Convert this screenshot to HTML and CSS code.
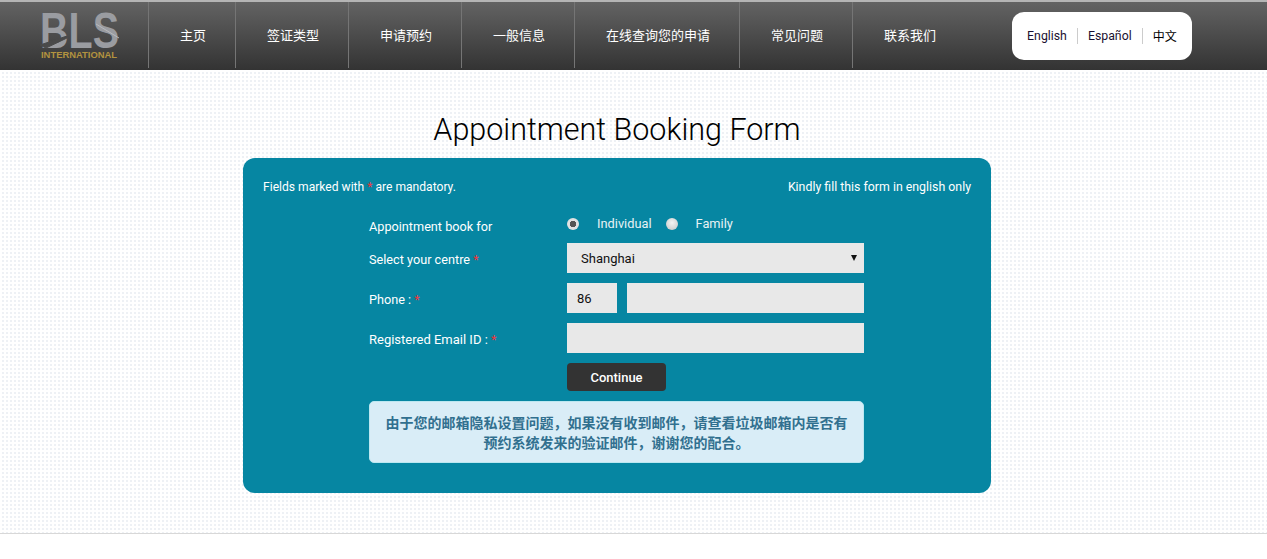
FILE: index.html
```html
<!DOCTYPE html>
<html lang="zh">
<head>
    <meta charset="UTF-8">
    <meta name="viewport" content="width=device-width, initial-scale=1.0">
    <title>Appointment Booking Form</title>
    <link rel="stylesheet" href="styles.css">
</head>
<body>
    <header class="top-bar">
        <a class="logo" href="#">
            <svg width="80" height="66" viewBox="0 0 80 66">
                <text class="logo-mark" x="0" y="46" textLength="79" lengthAdjust="spacingAndGlyphs">BLS</text>
                <path class="logo-cut" d="M0 43 L27 34 L27 36 L6 46 Z"/>
                <path class="logo-shine" d="M56 22 L79 36"/>
                <text class="logo-sub" x="1" y="56" textLength="76" lengthAdjust="spacingAndGlyphs">INTERNATIONAL</text>
            </svg>
        </a>
        <nav class="main-nav">
            <a href="#">主页</a>
            <a href="#">签证类型</a>
            <a href="#">申请预约</a>
            <a href="#">一般信息</a>
            <a href="#">在线查询您的申请</a>
            <a href="#">常见问题</a>
            <a href="#">联系我们</a>
        </nav>
        <div class="lang-box">
            <a href="#">English</a>
            <a href="#">Español</a>
            <a class="lang-cn" href="#">中文</a>
        </div>
    </header>

    <main class="page">
        <div class="page-inner">
            <h1>Appointment Booking Form</h1>
            <form class="booking-card">
                <div class="card-notes">
                    <span class="note-left">Fields marked with <em>*</em> are mandatory.</span>
                    <span class="note-right">Kindly fill this form in english only</span>
                </div>

                <div class="form-row radio-row">
                    <label class="field-label">Appointment book for</label>
                    <div class="radio-group">
                        <input type="radio" name="bookfor" id="individual" checked>
                        <label for="individual">Individual</label>
                        <input type="radio" name="bookfor" id="family">
                        <label for="family">Family</label>
                    </div>
                </div>

                <div class="form-row">
                    <label class="field-label">Select your centre <em>*</em></label>
                    <div class="select-wrap">
                        <select>
                            <option>Shanghai</option>
                        </select>
                    </div>
                </div>

                <div class="form-row">
                    <label class="field-label">Phone : <em>*</em></label>
                    <div class="phone-group">
                        <input class="phone-code" type="text" value="86">
                        <input type="text">
                    </div>
                </div>

                <div class="form-row">
                    <label class="field-label email-label">Registered Email ID : <em>*</em></label>
                    <input type="text">
                </div>

                <div class="form-row button-row">
                    <span class="field-label"></span>
                    <button type="button">Continue</button>
                </div>

                <div class="notice">由于您的邮箱隐私设置问题，如果没有收到邮件，请查看垃圾邮箱内是否有预约系统发来的验证邮件，谢谢您的配合。</div>
            </form>
        </div>
    </main>
</body>
</html>
```

FILE: styles.css
```css
html {
    background: #fff;
}
body {
    margin: 0;
    height: 559px;
    overflow: hidden;
    font-family: Roboto, "Noto Sans CJK SC", sans-serif;
    font-size: 13px;
    color: #fff;
}
a {
    text-decoration: none;
}
em {
    font-style: normal;
    color: #f0343c;
}

/* header */
.top-bar {
    display: flex;
    height: 68px;
    border-top: 2px solid #b5b5b5;
    background: linear-gradient(#636363, #333);
}
.logo {
    width: 148px;
    box-sizing: border-box;
    padding-left: 40px;
    display: block;
}
.logo svg {
    display: block;
}
.logo-mark {
    font: bold 50px "Liberation Sans", sans-serif;
    fill: #9a9ca1;
}
.logo-cut {
    fill: #4a4a4a;
    stroke: #4a4a4a;
}
.logo-shine {
    fill: none;
    stroke: #b8babe;
}
.logo-sub {
    font: bold 9px "Liberation Sans", sans-serif;
    fill: #b3933f;
}
.main-nav {
    display: flex;
    height: 66px;
}
.main-nav a {
    padding: 0 29px 0 31px;
    border-left: 1px solid #757575;
    font-family: "Noto Sans CJK SC", sans-serif;
    font-size: 13px;
    line-height: 66px;
    color: #fff;
}
.lang-box {
    display: flex;
    align-items: center;
    width: 180px;
    height: 48px;
    box-sizing: border-box;
    margin: 10px 0 0 47px;
    padding-left: 15px;
    border-radius: 12px;
    background: #fff;
}
.lang-box a {
    padding-right: 10px;
    margin-right: 10px;
    border-right: 1px solid #ccc;
    font-size: 12.3px;
    line-height: 16px;
    white-space: nowrap;
    color: #1a1030;
}
.lang-box .lang-cn {
    margin: 0;
    padding: 0;
    border: 0;
    font-family: "Noto Sans CJK SC", sans-serif;
    font-size: 12px;
    color: #000;
}

/* page */
.page {
    height: 464px;
    box-sizing: border-box;
    background-color: #fff;
    background-image:
        linear-gradient(90deg, #fff 2px, transparent 2px),
        linear-gradient(#fff 2px, #eef1f5 2px);
    background-size: 4px 4px;
    border-bottom: 1px solid #d8d8d8;
}
.page-inner {
    width: 1234px;
    padding-top: 40px;
}
h1 {
    margin: 0 0 8px;
    font-size: 30.5px;
    font-weight: 300;
    line-height: 40px;
    text-align: center;
    color: #000;
}
.booking-card {
    width: 748px;
    height: 335px;
    box-sizing: border-box;
    margin: 0 auto;
    padding: 21px 20px 0;
    border-radius: 12px;
    background: #0686a2;
}
.card-notes {
    display: flex;
    justify-content: space-between;
    height: 16px;
    line-height: 16px;
    margin-bottom: 17px;
}
.note-left {
    font-size: 12.1px;
}
.note-right {
    font-size: 12.35px;
}
.form-row {
    display: flex;
    align-items: center;
    margin: 0 0 10px 106px;
    width: 495px;
}
.field-label {
    width: 198px;
    flex: none;
    padding-top: 2px;
    font-size: 12.7px;
}
.email-label {
    font-size: 13px;
}
.radio-row {
    height: 24px;
    margin-bottom: 7px;
}
.radio-row .field-label {
    padding-top: 5px;
}
.radio-group {
    display: flex;
    align-items: center;
    color: #e6f2f5;
    font-size: 12.8px;
    padding-bottom: 1px;
}
.radio-group input {
    appearance: none;
    width: 12px;
    height: 12px;
    flex: none;
    margin: 0 18px 0 0;
    padding: 0;
    border-radius: 50%;
    background: radial-gradient(circle at 50% 40%, #f4f4f4, #c4c4c4);
}
.radio-group input:checked {
    background: radial-gradient(circle, #555 3px, #e2e2e2 3.5px);
}
.radio-group label {
    margin-right: 14px;
}
input[type="text"], select {
    width: 297px;
    height: 30px;
    box-sizing: border-box;
    border: 0;
    border-radius: 0;
    background: #e8e8e8;
    font-family: Roboto, sans-serif;
    font-size: 13px;
    color: #111;
}
.select-wrap {
    position: relative;
    height: 30px;
}
.select-wrap::after {
    content: "";
    position: absolute;
    top: 12px;
    right: 7px;
    border: 3px solid transparent;
    border-top: 6px solid #111;
    border-bottom: 0;
}
select {
    display: block;
    appearance: none;
    padding: 0 14px;
}
.phone-group {
    display: flex;
    gap: 10px;
    width: 297px;
}
.phone-group input {
    flex: 1;
    width: 0;
}
.phone-group .phone-code {
    flex: none;
    width: 50px;
    padding: 0 10px;
}
button {
    width: 99px;
    height: 28px;
    padding: 0;
    border: 0;
    border-radius: 4px;
    background: #333;
    color: #fff;
    font-family: Roboto, sans-serif;
    font-size: 13px;
    font-weight: 500;
}
.notice {
    width: 495px;
    height: 62px;
    box-sizing: border-box;
    margin-left: 106px;
    padding: 10px 15px;
    border: 1px solid #bce8f1;
    border-radius: 5px;
    background: #d9edf7;
    color: #31708f;
    font-family: "Noto Sans CJK SC", sans-serif;
    font-size: 14px;
    font-weight: 700;
    line-height: 20px;
    text-align: center;
}
```
